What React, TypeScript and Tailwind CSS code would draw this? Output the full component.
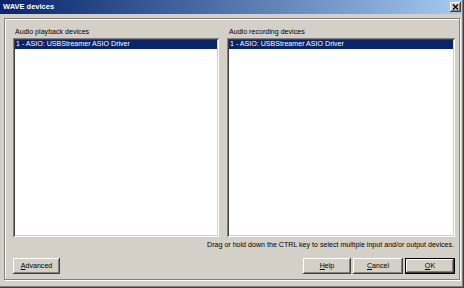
const raised =
  'shadow-[inset_-1px_-1px_0_#404040,inset_1px_1px_0_#ffffff,inset_-2px_-2px_0_#808080,inset_2px_2px_0_#d4d0c8]'
const sunken =
  'shadow-[inset_1px_1px_0_#808080,inset_-1px_-1px_0_#ffffff,inset_2px_2px_0_#404040,inset_-2px_-2px_0_#d4d0c8]'

function ListBox({ label, width, item }: { label: string; width: string; item: string }) {
  return (
    <div className={`flex flex-col ${width}`}>
      <div className="h-[11px] leading-[11px] pl-[2px] text-black">{label}</div>
      <div className={`h-[199px] bg-white p-[2px] ${sunken}`}>
        <div className="h-[9px] leading-[9px] bg-[#0a246a] text-white pl-[1px] whitespace-nowrap">{item}</div>
      </div>
    </div>
  )
}

function Button({ children, className = '', isDefault = false }: { children: React.ReactNode; className?: string; isDefault?: boolean }) {
  if (isDefault) {
    return (
      <div className={`h-[16px] border border-black bg-[#d4d0c8] ${className}`}>
        <div className={`h-full flex items-center justify-center ${raised}`}>{children}</div>
      </div>
    )
  }
  return (
    <div className={`h-[16px] flex items-center justify-center bg-[#d4d0c8] ${raised} ${className}`}>{children}</div>
  )
}

export default function App() {
  return (
    <div
      className="w-[464px] h-[288px] bg-[#d4d0c8] flex flex-col overflow-hidden text-[7.1px] text-black shadow-[inset_-1px_-1px_0_#404040,inset_-2px_-2px_0_#808080]"
      style={{ fontFamily: '"Liberation Sans", Arial, sans-serif' }}
    >
      <div className="h-[14px] mr-[2px] flex items-center pl-[3px] pr-[1px] bg-gradient-to-r from-[#0a246a] to-[#a6caf0]">
        <span className="text-white font-bold text-[7.5px]">WAVE devices</span>
        <div className={`ml-auto w-[11px] h-[10px] bg-[#d4d0c8] flex items-center justify-center ${raised}`}>
          <svg width="7" height="6" viewBox="0 0 7 6">
            <path d="M1 0.5 L6 5.5 M6 0.5 L1 5.5" stroke="#000" strokeWidth="1.4" />
          </svg>
        </div>
      </div>

      <div className="px-[4px] pt-[4px]">
        <div className="border border-[#808080] shadow-[1px_1px_0_#ffffff,inset_1px_1px_0_#ffffff] pl-[8px] pr-[4px] pt-[8px] pb-[5px] flex flex-col">
          <div className="flex gap-[8px]">
            <ListBox label="Audio playback devices" width="w-[206px]" item="1 - ASIO: USBStreamer ASIO Driver" />
            <ListBox label="Audio recording devices" width="flex-1" item="1 - ASIO: USBStreamer ASIO Driver" />
          </div>
          <div className="mt-[3px] h-[11px] leading-[11px] text-right pr-[1px] whitespace-nowrap">
            Drag or hold down the CTRL key to select multiple input and/or output devices.
          </div>
          <div className="mt-[7px] flex items-center">
            <Button className="w-[47px]">
              <span><span className="underline">A</span>dvanced</span>
            </Button>
            <div className="ml-auto flex gap-[2px]">
              <Button className="w-[48px]">
                <span><span className="underline">H</span>elp</span>
              </Button>
              <Button className="w-[50px]">
                <span><span className="underline">C</span>ancel</span>
              </Button>
              <Button className="w-[50px]" isDefault>
                <span><span className="underline">O</span>K</span>
              </Button>
            </div>
          </div>
        </div>
      </div>
    </div>
  )
}
